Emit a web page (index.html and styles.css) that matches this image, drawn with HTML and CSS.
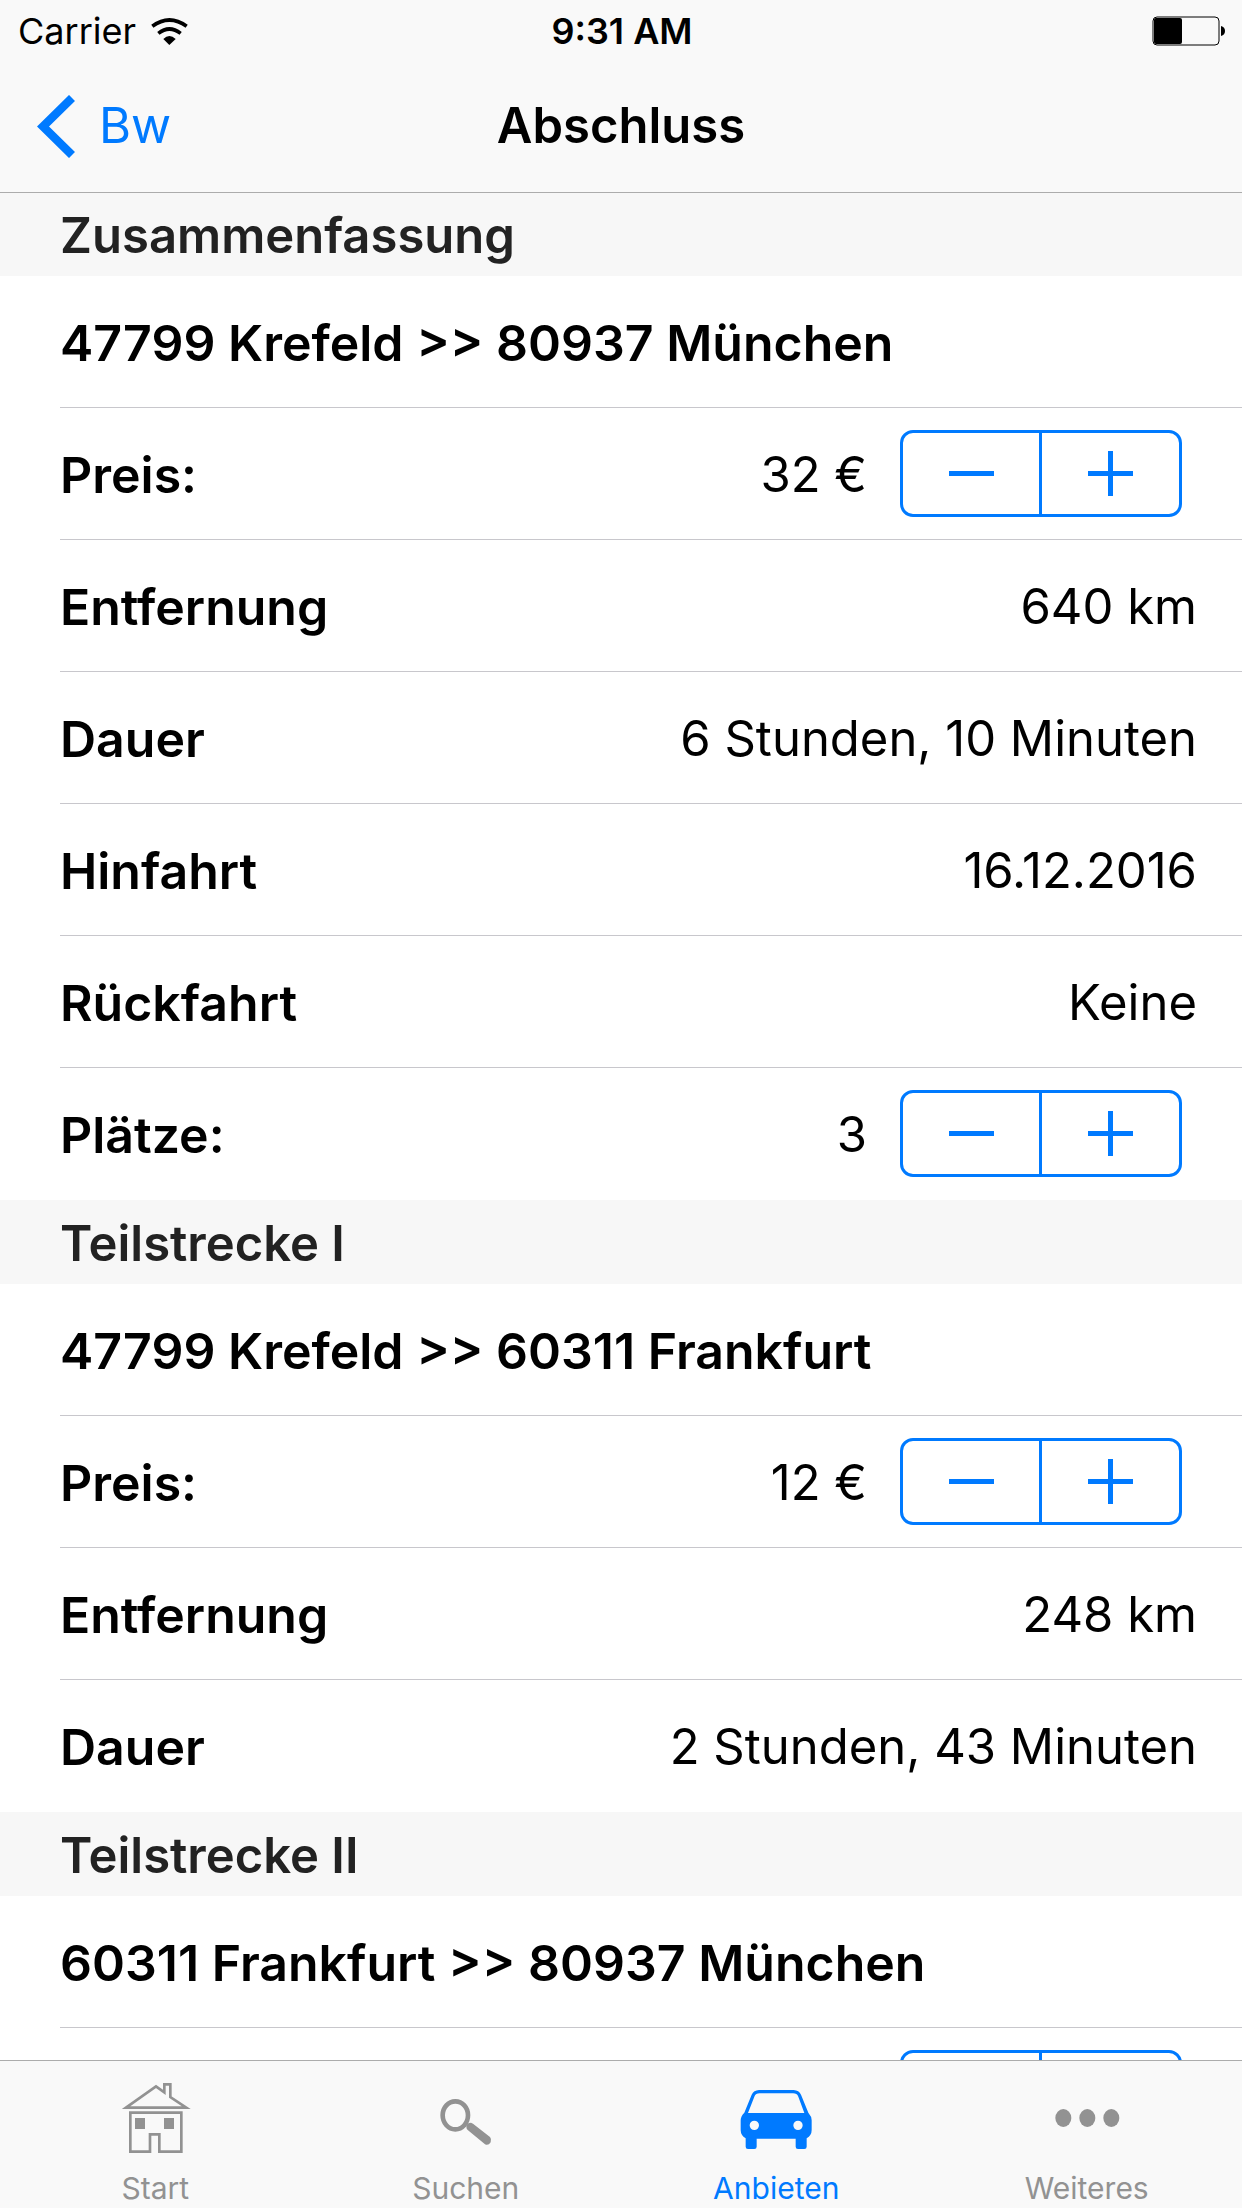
FILE: index.html
```html
<!DOCTYPE html>
<html lang="de">
<head>
<meta charset="utf-8">
<meta name="viewport" content="width=device-width, initial-scale=1">
<title>Abschluss</title>
<link rel="stylesheet" href="styles.css">
</head>
<body>
<svg class="symbols" aria-hidden="true">
  <symbol id="minus" viewBox="0 0 45 45"><path d="M0 20H45V25H0Z"/></symbol>
  <symbol id="plus" viewBox="0 0 45 45"><path d="M0 20H20V0H25V20H45V25H25V45H20V25H0Z"/></symbol>
</svg>
<div class="app">
  <header class="top">
    <div class="status">
      <div class="status-left">
        <span>Carrier</span>
        <svg class="wifi" viewBox="0 0 111 81" aria-hidden="true">
          <path d="M4 25Q55-13 107 25M22 46Q55 20 89 46" fill="none" stroke="#000" stroke-width="11"/>
          <path d="M37 63Q55 45 74 63L55 81Z"/>
        </svg>
      </div>
      <span class="time">9:31 AM</span>
      <svg class="battery" viewBox="0 0 74 30" aria-hidden="true">
        <rect x="1" y="1" width="66" height="28" rx="4" fill="none" stroke="#000" stroke-width="1"/>
        <rect x="2" y="2" width="28" height="26" rx="2"/>
        <path d="M69 10Q73 11 73 15T69 20Z"/>
      </svg>
    </div>
    <nav class="navbar">
      <a class="back" href="#bw">
        <svg class="chevron" viewBox="0 0 38 63" aria-hidden="true"><path d="M35 3L6 31.5L35 60" fill="none" stroke="currentColor" stroke-width="8.5"/></svg>
        <span>Bw</span>
      </a>
      <h1 class="title">Abschluss</h1>
    </nav>
  </header>

  <main class="content">
    <section>
      <h2 class="section-title">Zusammenfassung</h2>
      <ul class="rows">
        <li class="row"><span class="label">47799 Krefeld &gt;&gt; 80937 München</span></li>
        <li class="row row-stepper">
          <span class="label">Preis:</span><span class="value">32 €</span>
          <div class="stepper" role="group" aria-label="Preis">
            <button type="button" aria-label="Weniger"><svg><use href="#minus"/></svg></button>
            <button type="button" aria-label="Mehr"><svg><use href="#plus"/></svg></button>
          </div>
        </li>
        <li class="row"><span class="label">Entfernung</span><span class="value">640 km</span></li>
        <li class="row"><span class="label">Dauer</span><span class="value">6 Stunden, 10 Minuten</span></li>
        <li class="row"><span class="label">Hinfahrt</span><span class="value">16.12.2016</span></li>
        <li class="row"><span class="label">Rückfahrt</span><span class="value">Keine</span></li>
        <li class="row row-stepper">
          <span class="label">Plätze:</span><span class="value">3</span>
          <div class="stepper" role="group" aria-label="Plätze">
            <button type="button" aria-label="Weniger"><svg><use href="#minus"/></svg></button>
            <button type="button" aria-label="Mehr"><svg><use href="#plus"/></svg></button>
          </div>
        </li>
      </ul>
    </section>
    <section>
      <h2 class="section-title">Teilstrecke I</h2>
      <ul class="rows">
        <li class="row"><span class="label">47799 Krefeld &gt;&gt; 60311 Frankfurt</span></li>
        <li class="row row-stepper">
          <span class="label">Preis:</span><span class="value">12 €</span>
          <div class="stepper" role="group" aria-label="Preis Teilstrecke I">
            <button type="button" aria-label="Weniger"><svg><use href="#minus"/></svg></button>
            <button type="button" aria-label="Mehr"><svg><use href="#plus"/></svg></button>
          </div>
        </li>
        <li class="row"><span class="label">Entfernung</span><span class="value">248 km</span></li>
        <li class="row"><span class="label">Dauer</span><span class="value">2 Stunden, 43 Minuten</span></li>
      </ul>
    </section>
    <section>
      <h2 class="section-title">Teilstrecke II</h2>
      <ul class="rows">
        <li class="row"><span class="label">60311 Frankfurt &gt;&gt; 80937 München</span></li>
        <li class="row row-stepper">
          <div class="stepper" role="group" aria-label="Preis Teilstrecke II">
            <button type="button" aria-label="Weniger"><svg><use href="#minus"/></svg></button>
            <button type="button" aria-label="Mehr"><svg><use href="#plus"/></svg></button>
          </div>
        </li>
      </ul>
    </section>
  </main>

  <nav class="tabs">
    <a class="tab" href="#start">
      <svg viewBox="30 78 270 252" aria-hidden="true">
        <path d="M78 173L168 109L193 127V103H211V141L259 173ZM91 188H244V305H178V253H150V305H91Z" fill="none" stroke="currentColor" stroke-width="8"/>
        <path d="M105 204H135V237H105ZM192 204H222V237H192Z"/>
      </svg>
      <span>Start</span>
    </a>
    <a class="tab" href="#suchen">
      <svg viewBox="62 78 270 252" aria-hidden="true">
        <ellipse cx="165" cy="196" rx="38" ry="42" fill="none" stroke="currentColor" stroke-width="14"/>
        <path d="M198 230Q199 218 212 218L218 221L269 261Q275 268 271 277Q264 288 254 283L203 241Q198 237 198 230Z"/>
      </svg>
      <span>Suchen</span>
    </a>
    <a class="tab tab-active" href="#anbieten" aria-current="page">
      <svg viewBox="94 78 270 252" aria-hidden="true">
        <path fill-rule="evenodd" d="M178 120H282Q298 121 304 134L326 188Q336 199 336 211V240Q336 256 321 265V290Q321 297 314 297H295Q288 297 288 290V266H171V290Q171 297 164 297H145Q138 297 138 290V265Q123 256 123 240V211Q123 199 134 188L156 134Q162 121 178 120ZM180 130Q168 130 164 140L145 189H314L296 140Q292 130 280 130ZM164 212A14 14 0 1 0 164 240A14 14 0 1 0 164 212ZM295 212A14 14 0 1 0 295 240A14 14 0 1 0 295 212Z"/>
      </svg>
      <span>Anbieten</span>
    </a>
    <a class="tab" href="#weiteres">
      <svg viewBox="125 78 270 252" aria-hidden="true">
        <ellipse cx="189" cy="204" rx="24" ry="27"/><ellipse cx="261" cy="204" rx="24" ry="27"/><ellipse cx="333" cy="204" rx="24" ry="27"/>
      </svg>
      <span>Weiteres</span>
    </a>
  </nav>
</div>
</body>
</html>
```
FILE: styles.css
```css
* { box-sizing: border-box; }

body {
  margin: 0;
  background: #fff;
  color: #000;
  font-family: Inter, "Liberation Sans", sans-serif;
  font-size: 49px;
  line-height: 60px;
}

.symbols { display: none; }

.app {
  display: flex;
  flex-direction: column;
  height: 100vh;
}

.top {
  flex: none;
  background: #f9f9f9;
  border-bottom: 1px solid #acacac;
}

.status {
  display: grid;
  grid-template-columns: 1fr auto 1fr;
  align-items: center;
  height: 60px;
  padding: 2px 16px 0 18px;
  font-size: 36px;
  line-height: 42px;
}

.status-left {
  display: flex;
  align-items: center;
  gap: 15px;
}

.wifi { width: 37px; height: 27px; }
.time { font-weight: 600; }
.battery { justify-self: end; width: 74px; height: 30px; }

.navbar {
  display: grid;
  grid-template-columns: 1fr auto 1fr;
  align-items: center;
  height: 132px;
  padding: 0 37px;
}

.back {
  display: flex;
  align-items: center;
  gap: 24px;
  color: #007aff;
  text-decoration: none;
}

.chevron { width: 38px; height: 63px; }

.title {
  margin: 0;
  font-size: 49px;
  font-weight: 600;
}

.content {
  flex: 1;
  min-height: 0;
  overflow-y: auto;
  scrollbar-width: none;
}

.section-title {
  margin: 0;
  padding: 14px 60px 10px;
  background: #f7f7f7;
  color: #222;
  font-size: 49px;
  font-weight: 600;
}

.content section:first-child .section-title { padding-top: 13px; }

.rows {
  margin: 0;
  padding: 0 0 0 60px;
  list-style: none;
}

.row {
  display: flex;
  align-items: center;
  min-height: 132px;
  padding-right: 45px;
  border-bottom: 1px solid #c8c7cc;
}

.row:last-child { border-bottom-color: transparent; }
.row-stepper { padding-right: 60px; }

.label { padding-top: 3px; font-size: 50px; font-weight: 600; }
.value { margin-left: auto; padding-top: 3px; }

.stepper {
  display: flex;
  width: 282px;
  height: 87px;
  margin-left: 33px;
  border: 3px solid #007aff;
  border-radius: 13px;
}

.stepper:first-child { margin-left: auto; }

.stepper button {
  display: flex;
  flex: 1;
  align-items: center;
  justify-content: center;
  padding: 0;
  border: 0;
  background: none;
  color: #007aff;
}

.stepper button + button {
  flex: 0 0 140px;
  border-left: 3px solid #007aff;
}

.stepper svg { width: 45px; height: 45px; fill: currentColor; }

.tabs {
  display: flex;
  flex: none;
  height: 148px;
  background: #f9f9f9;
  border-top: 1px solid #acacac;
}

.tab {
  display: flex;
  flex: 1;
  flex-direction: column;
  align-items: center;
  gap: 10px;
  padding-top: 15px;
  color: #929292;
  font-size: 30px;
  line-height: 36px;
  text-decoration: none;
}

.tab svg { width: 90px; height: 84px; fill: currentColor; }
.tab-active { color: #007aff; }
```
